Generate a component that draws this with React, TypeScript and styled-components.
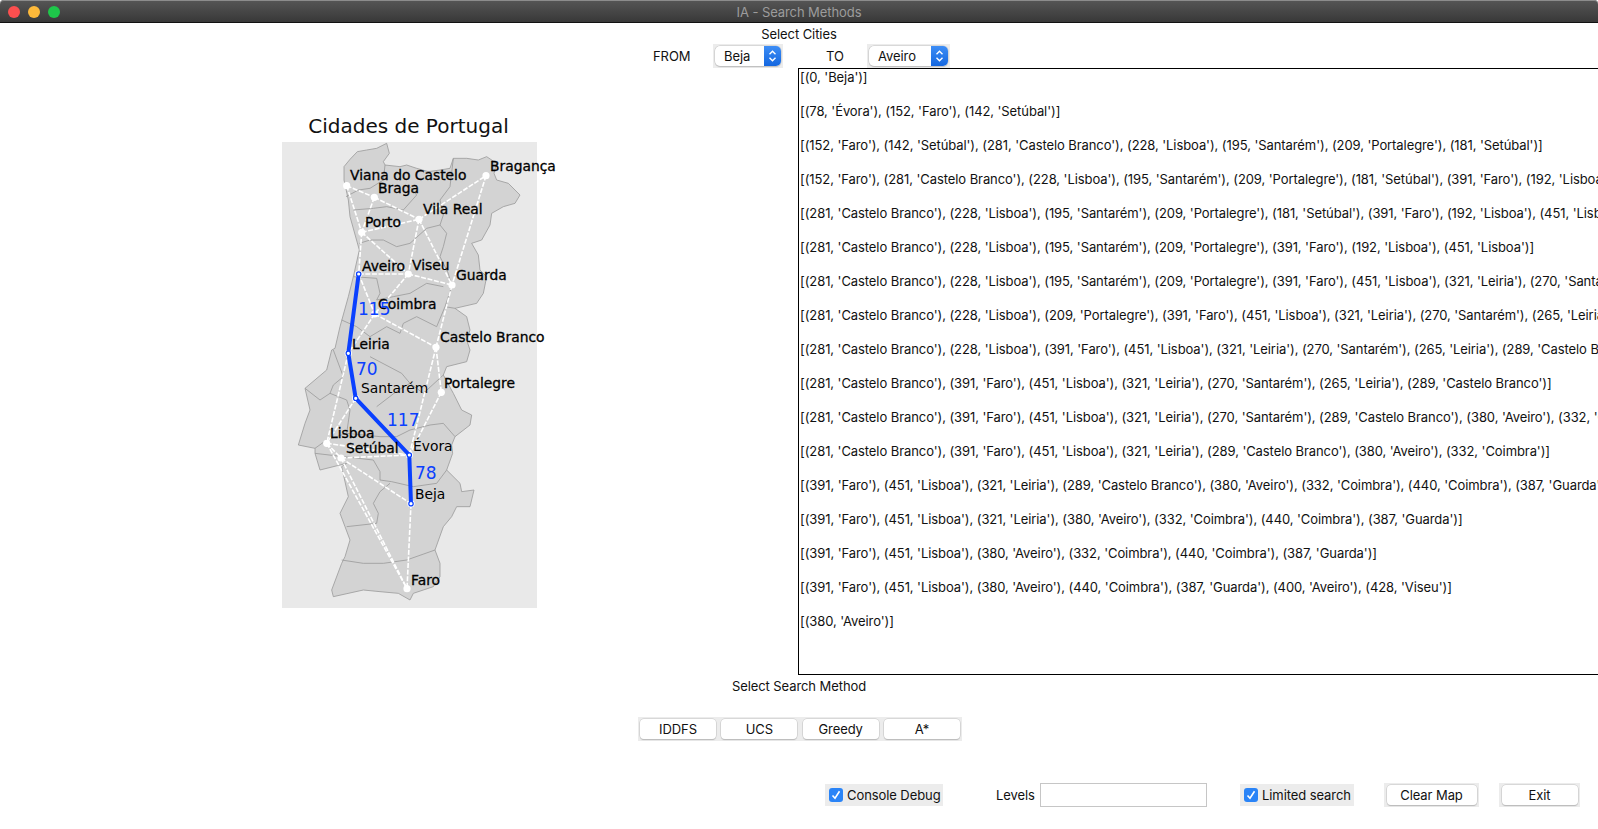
import React from 'react';
import styled, { createGlobalStyle } from 'styled-components';

const GlobalStyle = createGlobalStyle`
  html, body {
    margin: 0;
    padding: 0;
    background: #fff;
    overflow: hidden;
  }
  body {
    font-family: 'Inter', 'Liberation Sans', sans-serif;
    font-size: 13px;
    letter-spacing: -0.08px;
    color: #111;
  }
`;

const searchLog = [
  "[(0, 'Beja')]",
  "[(78, 'Évora'), (152, 'Faro'), (142, 'Setúbal')]",
  "[(152, 'Faro'), (142, 'Setúbal'), (281, 'Castelo Branco'), (228, 'Lisboa'), (195, 'Santarém'), (209, 'Portalegre'), (181, 'Setúbal')]",
  "[(152, 'Faro'), (281, 'Castelo Branco'), (228, 'Lisboa'), (195, 'Santarém'), (209, 'Portalegre'), (181, 'Setúbal'), (391, 'Faro'), (192, 'Lisboa')]",
  "[(281, 'Castelo Branco'), (228, 'Lisboa'), (195, 'Santarém'), (209, 'Portalegre'), (181, 'Setúbal'), (391, 'Faro'), (192, 'Lisboa'), (451, 'Lisboa')]",
  "[(281, 'Castelo Branco'), (228, 'Lisboa'), (195, 'Santarém'), (209, 'Portalegre'), (391, 'Faro'), (192, 'Lisboa'), (451, 'Lisboa')]",
  "[(281, 'Castelo Branco'), (228, 'Lisboa'), (195, 'Santarém'), (209, 'Portalegre'), (391, 'Faro'), (451, 'Lisboa'), (321, 'Leiria'), (270, 'Santarém')]",
  "[(281, 'Castelo Branco'), (228, 'Lisboa'), (209, 'Portalegre'), (391, 'Faro'), (451, 'Lisboa'), (321, 'Leiria'), (270, 'Santarém'), (265, 'Leiria')]",
  "[(281, 'Castelo Branco'), (228, 'Lisboa'), (391, 'Faro'), (451, 'Lisboa'), (321, 'Leiria'), (270, 'Santarém'), (265, 'Leiria'), (289, 'Castelo Branco')]",
  "[(281, 'Castelo Branco'), (391, 'Faro'), (451, 'Lisboa'), (321, 'Leiria'), (270, 'Santarém'), (265, 'Leiria'), (289, 'Castelo Branco')]",
  "[(281, 'Castelo Branco'), (391, 'Faro'), (451, 'Lisboa'), (321, 'Leiria'), (270, 'Santarém'), (289, 'Castelo Branco'), (380, 'Aveiro'), (332, 'Coimbra')]",
  "[(281, 'Castelo Branco'), (391, 'Faro'), (451, 'Lisboa'), (321, 'Leiria'), (289, 'Castelo Branco'), (380, 'Aveiro'), (332, 'Coimbra')]",
  "[(391, 'Faro'), (451, 'Lisboa'), (321, 'Leiria'), (289, 'Castelo Branco'), (380, 'Aveiro'), (332, 'Coimbra'), (440, 'Coimbra'), (387, 'Guarda')]",
  "[(391, 'Faro'), (451, 'Lisboa'), (321, 'Leiria'), (380, 'Aveiro'), (332, 'Coimbra'), (440, 'Coimbra'), (387, 'Guarda')]",
  "[(391, 'Faro'), (451, 'Lisboa'), (380, 'Aveiro'), (332, 'Coimbra'), (440, 'Coimbra'), (387, 'Guarda')]",
  "[(391, 'Faro'), (451, 'Lisboa'), (380, 'Aveiro'), (440, 'Coimbra'), (387, 'Guarda'), (400, 'Aveiro'), (428, 'Viseu')]",
  "[(380, 'Aveiro')]",
];

// node positions in page pixels, read off the reference
const cities: Record<string, [number, number]> = {
  viana: [346.7, 185.7],
  braga: [374.3, 197.3],
  vilaReal: [419, 219.3],
  braganca: [486, 175.7],
  porto: [361.7, 232.3],
  aveiro: [358.7, 274],
  viseu: [408.3, 274],
  guarda: [452, 285],
  coimbra: [374.7, 314],
  casteloBranco: [436, 347.3],
  leiria: [348.3, 353.3],
  santarem: [355.7, 398.3],
  portalegre: [441.3, 392.3],
  lisboa: [326.7, 443.3],
  setubal: [341, 458],
  evora: [409.3, 455],
  beja: [411, 503.7],
  faro: [407, 588.7],
};

const roads: [string, string][] = [
  ['viana', 'braga'],
  ['viana', 'porto'],
  ['braga', 'porto'],
  ['braga', 'vilaReal'],
  ['porto', 'vilaReal'],
  ['porto', 'viseu'],
  ['porto', 'aveiro'],
  ['vilaReal', 'viseu'],
  ['vilaReal', 'guarda'],
  ['vilaReal', 'braganca'],
  ['braganca', 'guarda'],
  ['aveiro', 'viseu'],
  ['aveiro', 'coimbra'],
  ['viseu', 'guarda'],
  ['viseu', 'coimbra'],
  ['guarda', 'casteloBranco'],
  ['coimbra', 'casteloBranco'],
  ['coimbra', 'leiria'],
  ['casteloBranco', 'portalegre'],
  ['casteloBranco', 'evora'],
  ['portalegre', 'evora'],
  ['leiria', 'lisboa'],
  ['santarem', 'lisboa'],
  ['lisboa', 'setubal'],
  ['lisboa', 'evora'],
  ['setubal', 'evora'],
  ['setubal', 'beja'],
  ['setubal', 'faro'],
  ['lisboa', 'faro'],
  ['beja', 'faro'],
];

const route = ['aveiro', 'leiria', 'santarem', 'evora', 'beja'];

const labels: { text: string; x: number; y: number; plain?: boolean }[] = [
  { text: 'Viana do Castelo', x: 350, y: 180 },
  { text: 'Braga', x: 378, y: 193 },
  { text: 'Bragança', x: 490, y: 171 },
  { text: 'Vila Real', x: 423, y: 214 },
  { text: 'Porto', x: 365, y: 227 },
  { text: 'Aveiro', x: 362, y: 271 },
  { text: 'Viseu', x: 412, y: 270 },
  { text: 'Guarda', x: 456, y: 280 },
  { text: 'Coimbra', x: 378, y: 309 },
  { text: 'Castelo Branco', x: 440, y: 342 },
  { text: 'Leiria', x: 352, y: 349 },
  { text: 'Santarém', x: 361, y: 393, plain: true },
  { text: 'Portalegre', x: 444, y: 388 },
  { text: 'Lisboa', x: 330, y: 438 },
  { text: 'Setúbal', x: 346, y: 453 },
  { text: 'Évora', x: 413, y: 451, plain: true },
  { text: 'Beja', x: 415, y: 499, plain: true },
  { text: 'Faro', x: 411, y: 585 },
];

const weights = [
  { text: '115', x: 358, y: 315 },
  { text: '70', x: 356, y: 375 },
  { text: '117', x: 387, y: 426 },
  { text: '78', x: 415, y: 479 },
];

// outline and district borders traced from the 3x crops
const top = (x: number, y: number) => `${270 + x / 3},${100 + y / 3}`;
const bottom = (x: number, y: number) => `${270 + x / 3},${350 + y / 3}`;

const outline = [
  ...([
    [222, 240], [222, 200], [240, 178], [262, 155], [290, 150], [320, 145], [350, 130], [358, 160],
    [340, 185], [345, 195], [390, 200], [410, 195], [440, 205], [475, 215], [510, 210], [540, 205],
    [550, 175], [590, 175], [625, 180], [650, 170], [680, 190], [672, 220], [680, 240], [715, 250],
    [750, 285], [735, 310], [700, 320], [665, 340], [660, 375], [635, 420], [605, 430], [625, 465],
    [630, 510], [650, 530], [640, 580], [620, 610], [555, 625], [590, 650], [600, 690], [590, 720],
  ] as number[][]).map(([x, y]) => top(x, y)),
  ...([
    [600, 0], [590, 35], [530, 50], [520, 75], [550, 130], [575, 180], [605, 195], [600, 225],
    [555, 260], [545, 285], [548, 310], [530, 360], [570, 400], [575, 425], [612, 420], [600, 470],
    [560, 470], [545, 500], [520, 530], [495, 600], [510, 640], [510, 680], [490, 710], [430, 730],
    [420, 750], [385, 730], [330, 725], [280, 720], [190, 740], [185, 720], [215, 640], [225, 620],
    [240, 570], [225, 530], [210, 490], [235, 440], [215, 350], [230, 340], [150, 360], [135, 310],
    [135, 295], [85, 285], [105, 220], [120, 180], [105, 115], [170, 60], [185, 0],
  ] as number[][]).map(([x, y]) => bottom(x, y)),
  ...([
    [195, 745], [210, 680], [235, 590], [250, 530], [268, 450], [240, 350], [235, 300],
  ] as number[][]).map(([x, y]) => top(x, y)),
].join(' ');

const topBorders: number[][][] = [
  [[228, 290], [265, 270], [300, 265], [340, 240], [345, 195]],
  [[420, 260], [440, 285], [400, 330], [350, 320], [310, 325], [250, 330]],
  [[550, 175], [540, 260], [510, 300], [520, 345], [510, 375], [470, 385], [420, 430], [380, 440], [340, 420], [300, 420], [268, 430]],
  [[510, 375], [530, 400], [520, 440], [510, 470], [535, 520], [545, 560], [525, 620], [555, 625]],
  [[250, 530], [320, 535], [330, 580], [320, 600], [370, 590], [420, 580], [470, 550], [520, 560]],
  [[525, 620], [500, 680], [440, 650], [400, 670], [390, 700], [350, 680], [300, 710], [260, 680], [215, 660]],
];

const bottomBorders: number[][][] = [
  [[190, 0], [220, 80], [190, 105], [180, 130], [150, 150], [105, 115]],
  [[180, 130], [230, 150], [240, 180], [230, 250], [170, 270], [135, 295]],
  [[300, 20], [395, 70], [420, 100], [460, 130], [520, 75]],
  [[320, 170], [385, 120], [420, 100]],
  [[230, 250], [330, 260], [380, 260], [420, 240], [480, 225], [520, 220], [555, 260]],
  [[135, 310], [220, 320], [310, 330], [330, 365], [330, 390], [365, 395], [430, 410], [500, 400], [530, 360]],
  [[360, 400], [330, 425], [310, 460], [325, 490], [320, 520], [230, 530]],
  [[215, 630], [280, 640], [340, 640], [410, 630], [495, 600]],
];

const Window = styled.div`
  width: 1598px;
  height: 829px;
  display: flex;
  flex-direction: column;
  overflow: hidden;
`;

const TitleBar = styled.header`
  position: relative;
  flex: none;
  height: 23px;
  padding-top: 2px;
  display: flex;
  align-items: center;
  justify-content: center;
  background: linear-gradient(#565656, #383838);
  border-bottom: 1px solid #111;
  border-radius: 4px 4px 0 0;
  box-shadow: inset 0 1px #8c8c8c;
  box-sizing: border-box;
  color: #9c9c9c;
  font-size: 13px;
`;

const Lights = styled.div`
  position: absolute;
  left: 8px;
  top: 6px;
  display: flex;
  gap: 8px;
`;

const Light = styled.span<{ $color: string }>`
  width: 12px;
  height: 12px;
  border-radius: 50%;
  background: ${(p) => p.$color};
`;

const Heading = styled.div<{ $height: number }>`
  flex: none;
  height: ${(p) => p.$height}px;
  display: flex;
  align-items: center;
  justify-content: center;
`;

const CityRow = styled.div`
  flex: none;
  height: 24px;
  display: flex;
  align-items: center;
  padding-left: 653px;
`;

const RowLabel = styled.span<{ $width: number }>`
  width: ${(p) => p.$width}px;
`;

const SelectWrap = styled.div<{ $width: number; $gap: number }>`
  width: ${(p) => p.$width}px;
  height: 24px;
  margin-right: ${(p) => p.$gap}px;
  padding: 2px;
  box-sizing: border-box;
  background: #ececec;
`;

const SelectBox = styled.div`
  height: 20px;
  display: flex;
  align-items: center;
  justify-content: space-between;
  padding-left: 9px;
  box-sizing: border-box;
  background: #fff;
  border-radius: 5px;
  box-shadow: 0 0 0 0.5px #c4c4c4, 0 1px 1px #bbb;
`;

const Stepper = styled.span`
  width: 17px;
  height: 20px;
  display: flex;
  align-items: center;
  justify-content: center;
  border-radius: 0 5px 5px 0;
  background: linear-gradient(#3d8df5, #1467e0);
`;

const Main = styled.main`
  flex: none;
  height: 607px;
  display: flex;
`;

const MapColumn = styled.div`
  flex: none;
  width: 798px;
  padding: 32px 0 0 270px;
  box-sizing: border-box;
`;

const LogBox = styled.div`
  flex: none;
  width: 840px;
  height: 607px;
  box-sizing: border-box;
  border: 1px solid #000;
  padding-left: 1px;
  overflow: hidden;
`;

const LogLine = styled.div`
  height: 34px;
  line-height: 17px;
  white-space: nowrap;
`;

const ButtonBar = styled.div`
  flex: none;
  width: 324px;
  height: 24px;
  margin-left: 638px;
  margin-top: 20px;
  padding: 2px;
  box-sizing: border-box;
  display: flex;
  justify-content: space-between;
  background: #ececec;
`;

const PushButton = styled.button<{ $width: number }>`
  width: ${(p) => p.$width}px;
  height: 20px;
  padding: 0;
  border: none;
  border-radius: 4px;
  background: #fff;
  box-shadow: 0 0 0 0.5px #c4c4c4, 0 1px 1px #b4b4b4;
  font: inherit;
  letter-spacing: inherit;
  color: inherit;
`;

const Footer = styled.div`
  flex: none;
  height: 24px;
  margin-top: 42px;
  display: flex;
  align-items: center;
  padding-left: 825px;
`;

const CheckGroup = styled.label<{ $width: number; $gap: number }>`
  width: ${(p) => p.$width}px;
  height: 22px;
  margin-right: ${(p) => p.$gap}px;
  padding-left: 4px;
  box-sizing: border-box;
  display: flex;
  align-items: center;
  gap: 4px;
  white-space: nowrap;
  background: #ececec;
`;

const CheckMark = styled.span`
  flex: none;
  width: 14px;
  height: 14px;
  display: flex;
  align-items: center;
  justify-content: center;
  border-radius: 3px;
  background: #2a84f7;
`;

const LevelsLabel = styled.span`
  width: 44px;
`;

const LevelsInput = styled.input`
  width: 167px;
  height: 24px;
  margin-right: 33px;
  box-sizing: border-box;
  border: 1px solid #c6c6c6;
  background: #fff;
`;

const ButtonFrame = styled.div<{ $width: number; $gap: number }>`
  width: ${(p) => p.$width}px;
  height: 24px;
  margin-right: ${(p) => p.$gap}px;
  padding: 2px;
  box-sizing: border-box;
  background: #ececec;
  display: flex;
  justify-content: center;
`;

const MapTitle = styled.text`
  font-family: 'DejaVu Sans', sans-serif;
  font-size: 20px;
  letter-spacing: 0;
  fill: #111;
`;

const CityLabel = styled.text<{ $plain?: boolean }>`
  font-family: 'DejaVu Sans', sans-serif;
  font-size: 13.85px;
  letter-spacing: 0;
  fill: #000;
  stroke: #000;
  stroke-width: ${(p) => (p.$plain ? 0 : 0.3)}px;
`;

const WeightLabel = styled.text`
  font-family: 'DejaVu Sans', sans-serif;
  font-size: 17px;
  letter-spacing: 0;
  fill: #0a40ff;
`;

const Chevrons = () => (
  <svg width="9" height="14" viewBox="0 0 9 14" fill="none" stroke="#fff" strokeWidth="1.4">
    <path d="M1.5 5.2 4.5 2.2l3 3" />
    <path d="M1.5 8.8l3 3 3-3" />
  </svg>
);

const Tick = () => (
  <svg width="10" height="10" viewBox="0 0 10 10" fill="none" stroke="#fff" strokeWidth="1.6">
    <path d="M1.5 5.5 4 8.3 8.5 1.3" />
  </svg>
);

const CitySelect = ({ value, width, gap }: { value: string; width: number; gap: number }) => (
  <SelectWrap $width={width} $gap={gap}>
    <SelectBox>
      {value}
      <Stepper>
        <Chevrons />
      </Stepper>
    </SelectBox>
  </SelectWrap>
);

const PortugalMap = () => (
  <svg width="300" height="520" viewBox="270 100 300 520" style={{ display: 'block' }}>
    <MapTitle x="408.5" y="133" textAnchor="middle">
      Cidades de Portugal
    </MapTitle>
    <rect x="282" y="142" width="255" height="466" fill="#e9e9e9" />
    <polygon points={outline} fill="#d3d3d3" stroke="#999" strokeWidth="0.8" />
    {topBorders.map((line, i) => (
      <polyline
        key={i}
        points={line.map(([x, y]) => top(x, y)).join(' ')}
        fill="none"
        stroke="#999"
        strokeWidth="0.8"
      />
    ))}
    {bottomBorders.map((line, i) => (
      <polyline
        key={i}
        points={line.map(([x, y]) => bottom(x, y)).join(' ')}
        fill="none"
        stroke="#999"
        strokeWidth="0.8"
      />
    ))}
    {roads.map(([a, b]) => (
      <line
        key={a + b}
        x1={cities[a][0]}
        y1={cities[a][1]}
        x2={cities[b][0]}
        y2={cities[b][1]}
        stroke="#fff"
        strokeWidth="1.6"
        strokeDasharray="5 1.6"
      />
    ))}
    {Object.entries(cities).map(([name, [x, y]]) => (
      <circle key={name} cx={x} cy={y} r="3.6" fill="#fff" />
    ))}
    <polyline
      points={route.map((c) => cities[c].join(',')).join(' ')}
      fill="none"
      stroke="#0a40ff"
      strokeWidth="4"
    />
    {route.map((c) => (
      <circle key={c} cx={cities[c][0]} cy={cities[c][1]} r="2.2" fill="#fff" stroke="#0a40ff" strokeWidth="1.2" />
    ))}
    {labels.map((l) => (
      <CityLabel key={l.text} x={l.x} y={l.y} $plain={l.plain}>
        {l.text}
      </CityLabel>
    ))}
    {weights.map((w) => (
      <WeightLabel key={w.text} x={w.x} y={w.y}>
        {w.text}
      </WeightLabel>
    ))}
  </svg>
);

export default function App() {
  return (
    <Window>
      <GlobalStyle />
      <TitleBar>
        <Lights>
          <Light $color="#fc4f4f" />
          <Light $color="#fdb93a" />
          <Light $color="#1ec74a" />
        </Lights>
        IA - Search Methods
      </TitleBar>
      <Heading $height={21}>Select Cities</Heading>
      <CityRow>
        <RowLabel $width={60}>FROM</RowLabel>
        <CitySelect value="Beja" width={70} gap={43} />
        <RowLabel $width={41}>TO</RowLabel>
        <CitySelect value="Aveiro" width={83} gap={0} />
      </CityRow>
      <Main>
        <MapColumn>
          <PortugalMap />
        </MapColumn>
        <LogBox>
          {searchLog.map((line, i) => (
            <LogLine key={i}>{line}</LogLine>
          ))}
        </LogBox>
      </Main>
      <Heading $height={22}>Select Search Method</Heading>
      <ButtonBar>
        <PushButton $width={76}>IDDFS</PushButton>
        <PushButton $width={76}>UCS</PushButton>
        <PushButton $width={76}>Greedy</PushButton>
        <PushButton $width={76}>A*</PushButton>
      </ButtonBar>
      <Footer>
        <CheckGroup $width={118} $gap={53}>
          <CheckMark>
            <Tick />
          </CheckMark>
          Console Debug
        </CheckGroup>
        <LevelsLabel>Levels</LevelsLabel>
        <LevelsInput />
        <CheckGroup $width={114} $gap={30}>
          <CheckMark>
            <Tick />
          </CheckMark>
          Limited search
        </CheckGroup>
        <ButtonFrame $width={95} $gap={20}>
          <PushButton $width={90}>Clear Map</PushButton>
        </ButtonFrame>
        <ButtonFrame $width={81} $gap={0}>
          <PushButton $width={76}>Exit</PushButton>
        </ButtonFrame>
      </Footer>
    </Window>
  );
}
